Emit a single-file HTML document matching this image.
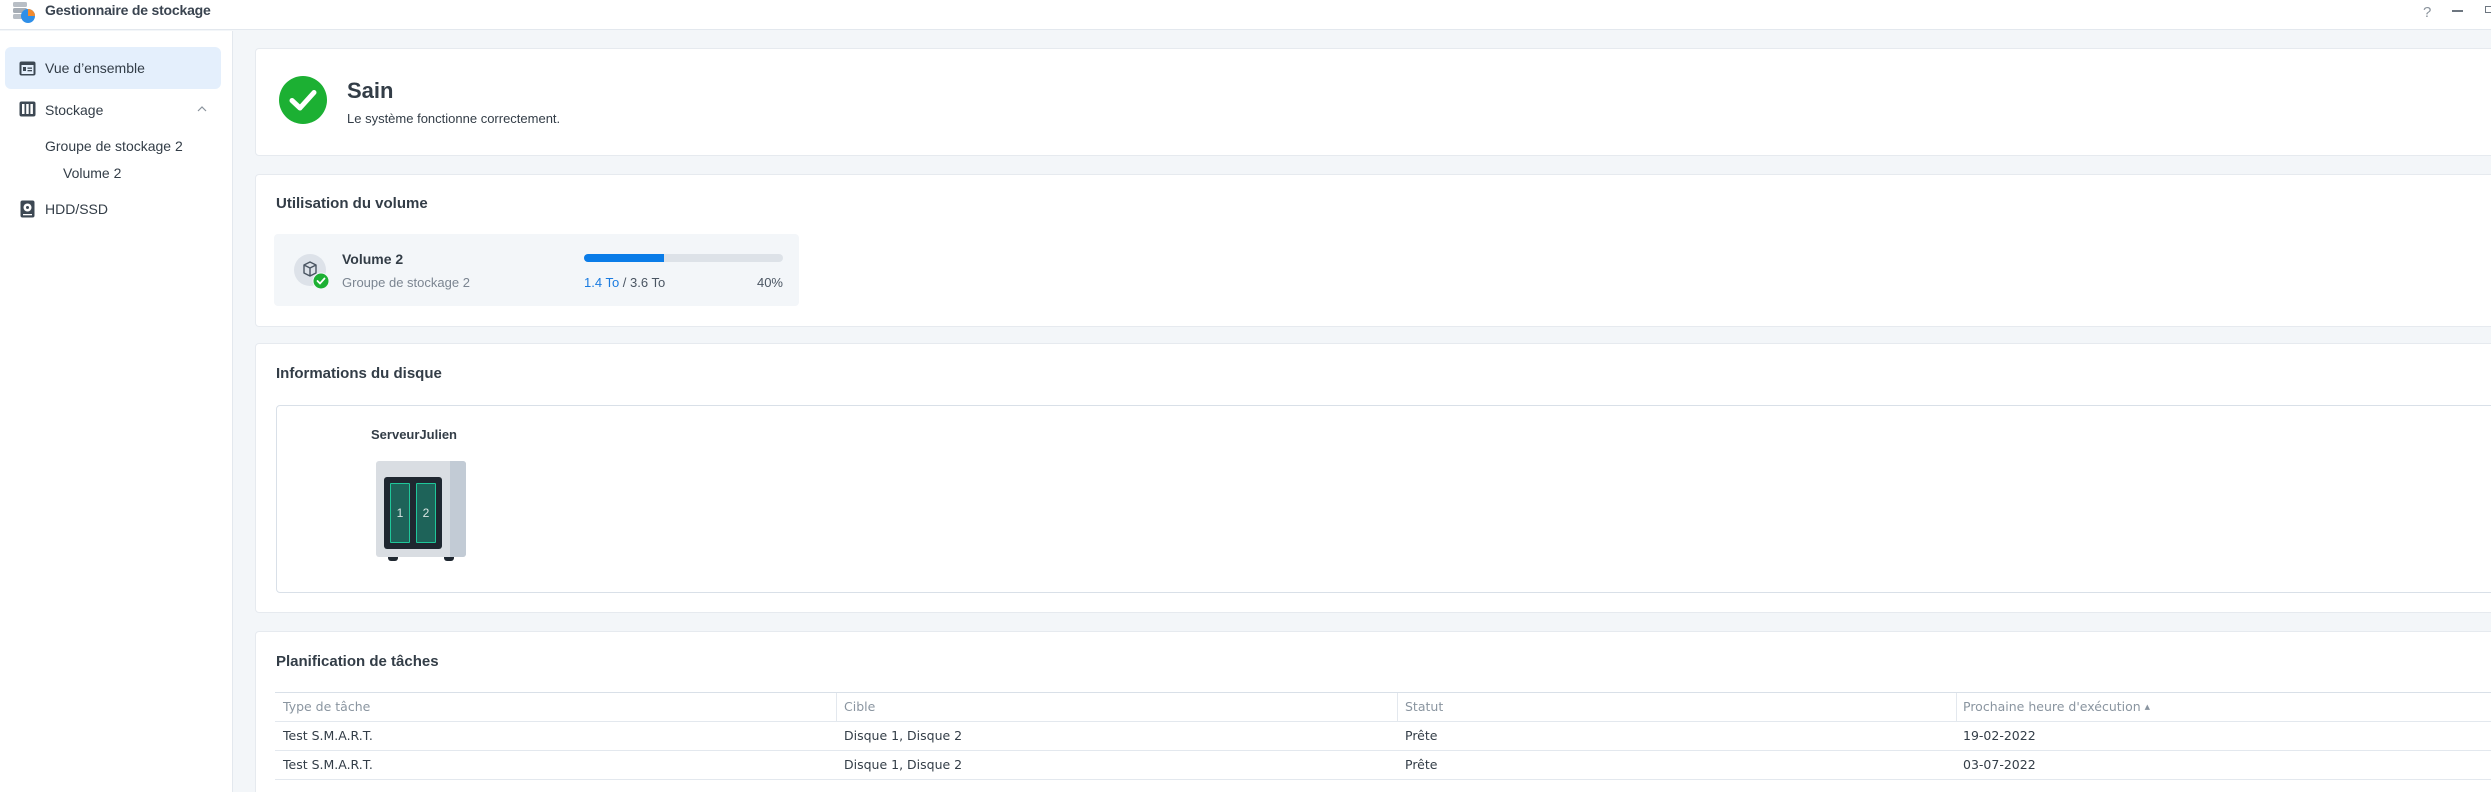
<!DOCTYPE html>
<html><head><meta charset="utf-8"><style>
*{margin:0;padding:0;box-sizing:border-box}
html{width:2491px;height:792px;overflow:hidden}
body{width:2491px;height:792px;overflow:hidden;background:#f3f6f9;font-family:"Liberation Sans",Arial,sans-serif;color:#333d47;position:relative}
.abs{position:absolute}
#top{left:0;top:0;width:2491px;height:30px;background:#fff;border-bottom:1px solid #e3e8ee}
#side{left:0;top:31px;width:233px;height:761px;background:#fff;border-right:1px solid #e3e8ee}
.card{background:#fff;border:1px solid #e6eaef;border-radius:4px;left:255px;width:2260px}
.t{white-space:nowrap}
.h{font-weight:bold;font-size:15px;color:#333d47}
.tbl{font-family:"DejaVu Sans",sans-serif;font-size:12.5px;color:#333d47}
</style></head><body>
<div id="top" class="abs">
  <svg class="abs" style="left:12px;top:1px" width="24" height="24" viewBox="0 0 24 24">
    <rect x="1" y="1" width="14" height="5" rx="1.5" fill="#b8bec5"/><rect x="1" y="7" width="14" height="5" rx="1.5" fill="#a6adb5"/><rect x="1" y="13" width="14" height="5" rx="1.5" fill="#b8bec5"/>
    <circle cx="16" cy="15" r="7" fill="#2f8fe8"/><path d="M16 15 L16 8 A7 7 0 0 1 23 15Z" fill="#f28b30"/>
  </svg>
  <div class="abs t" style="left:45px;top:2px;font-size:14px;font-weight:bold;color:#3a4450;letter-spacing:-0.2px">Gestionnaire de stockage</div>
  <div class="abs t" style="left:2423px;top:4px;font-size:15px;color:#8a939c">?</div>
  <div class="abs" style="left:2452px;top:10px;width:11px;height:1.5px;background:#6d7680"></div>
  <div class="abs" style="left:2485px;top:6px;width:8px;height:7px;border:1.5px solid #6d7680"></div>
</div>
<div id="side" class="abs">
  <div class="abs" style="left:5px;top:16px;width:216px;height:42px;background:#e4effc;border-radius:6px"></div>
  <svg class="abs" style="left:19px;top:30px" width="17" height="15" viewBox="0 0 17 15"><rect x="0.5" y="0.5" width="16" height="14" rx="2" fill="#3d4853"/><rect x="2.5" y="4" width="12" height="9" fill="#e4effc"/><rect x="4" y="6" width="3" height="4" fill="#3d4853"/><rect x="8.5" y="6.5" width="4.5" height="1.3" fill="#3d4853"/><rect x="8.5" y="9" width="4.5" height="1.3" fill="#3d4853"/></svg>
  <div class="abs t" style="left:45px;top:29px;font-size:14px;color:#333d47">Vue d’ensemble</div>
  <svg class="abs" style="left:19px;top:70px" width="17" height="16" viewBox="0 0 17 16"><rect x="0.5" y="0.5" width="16" height="15" rx="2" fill="#3d4853"/><rect x="3" y="3" width="2.5" height="10" fill="#fff"/><rect x="7.2" y="3" width="2.5" height="10" fill="#fff"/><rect x="11.4" y="3" width="2.5" height="10" fill="#fff"/></svg>
  <div class="abs t" style="left:45px;top:71px;font-size:14px">Stockage</div>
  <svg class="abs" style="left:197px;top:75px" width="10" height="6" viewBox="0 0 10 6"><path d="M1 5 L5 1 L9 5" fill="none" stroke="#8a939c" stroke-width="1.2"/></svg>
  <div class="abs t" style="left:45px;top:107px;font-size:14px">Groupe de stockage 2</div>
  <div class="abs t" style="left:63px;top:134px;font-size:14px">Volume 2</div>
  <svg class="abs" style="left:20px;top:169px" width="15" height="18" viewBox="0 0 15 18"><rect x="0.5" y="0.5" width="14" height="17" rx="2" fill="#3d4853"/><circle cx="7.5" cy="7.5" r="4" fill="#fff"/><circle cx="7.5" cy="7.5" r="1.5" fill="#3d4853"/><rect x="3" y="14" width="9" height="1.3" fill="#fff"/></svg>
  <div class="abs t" style="left:45px;top:170px;font-size:14px">HDD/SSD</div>
</div>

<div class="abs card" style="top:48px;height:108px"></div>
<svg class="abs" style="left:279px;top:76px" width="48" height="48" viewBox="0 0 48 48"><circle cx="24" cy="24" r="24" fill="#1cb033"/><path d="M13 24.5 L21 32 L35 16.5" fill="none" stroke="#fff" stroke-width="5" stroke-linecap="round" stroke-linejoin="round"/></svg>
<div class="abs t" style="left:347px;top:78px;font-size:22px;font-weight:bold;color:#333d47">Sain</div>
<div class="abs t" style="left:347px;top:111px;font-size:13px;color:#333d47">Le système fonctionne correctement.</div>

<div class="abs card" style="top:174px;height:153px"></div>
<div class="abs t h" style="left:276px;top:195px">Utilisation du volume</div>
<div class="abs" style="left:274px;top:234px;width:525px;height:72px;background:#f3f6f9;border-radius:4px"></div>
<svg class="abs" style="left:294px;top:254px" width="40" height="36" viewBox="0 0 40 36"><circle cx="16" cy="16" r="16" fill="#dde2e9"/><path d="M10 11 L16 8 L22 11 L22 19 L16 22 L10 19Z M10 11 L16 14 L22 11 M16 14 L16 22" fill="none" stroke="#4a5562" stroke-width="1.4" stroke-linejoin="round"/><circle cx="27" cy="27" r="8" fill="#1cb033" stroke="#f3f6f9" stroke-width="1"/><path d="M23.5 27 L26 29.5 L30.5 24.5" fill="none" stroke="#fff" stroke-width="1.8" stroke-linecap="round"/></svg>
<div class="abs t" style="left:342px;top:251px;font-size:14px;font-weight:bold">Volume 2</div>
<div class="abs t" style="left:342px;top:275px;font-size:13px;color:#7b8591">Groupe de stockage 2</div>
<div class="abs" style="left:584px;top:254px;width:199px;height:8px;background:#dde2e8;border-radius:4px"></div>
<div class="abs" style="left:584px;top:254px;width:80px;height:8px;background:#0a7ce8;border-radius:4px 0 0 4px"></div>
<div class="abs t" style="left:584px;top:275px;font-size:13px;color:#4a5562"><span style="color:#1a7be0">1.4 To</span> / 3.6 To</div>
<div class="abs t" style="left:743px;top:275px;width:40px;text-align:right;font-size:13px;color:#4a5562">40%</div>

<div class="abs card" style="top:343px;height:270px"></div>
<div class="abs t h" style="left:276px;top:365px">Informations du disque</div>
<div class="abs" style="left:276px;top:405px;width:2240px;height:188px;border:1px solid #d9e0e8;border-radius:4px;background:#fff"></div>
<div class="abs t" style="left:371px;top:427px;font-size:13px;font-weight:bold;color:#333d47">ServeurJulien</div>
<div class="abs" style="left:376px;top:461px;width:90px;height:96px;background:#d9dde2;border-radius:3px"></div>
<div class="abs" style="left:450px;top:461px;width:16px;height:96px;background:#c2cbd5;border-radius:0 3px 3px 0"></div>
<div class="abs" style="left:384px;top:477px;width:58px;height:72px;background:#1f2730;border-radius:3px"></div>
<div class="abs" style="left:390px;top:483px;width:20px;height:60px;background:#1e6359;border:1px solid #1fc79a;border-radius:1px;color:#dbe6e4;font-size:12px;text-align:center;line-height:58px">1</div>
<div class="abs" style="left:416px;top:483px;width:20px;height:60px;background:#1e6359;border:1px solid #1fc79a;border-radius:1px;color:#dbe6e4;font-size:12px;text-align:center;line-height:58px">2</div>
<div class="abs" style="left:388px;top:557px;width:10px;height:4px;background:#1f2730;border-radius:0 0 3px 3px"></div>
<div class="abs" style="left:444px;top:557px;width:10px;height:4px;background:#1f2730;border-radius:0 0 3px 3px"></div>

<div class="abs card" style="top:631px;height:161px;border-bottom:none;border-radius:4px 4px 0 0"></div>
<div class="abs t h" style="left:276px;top:653px">Planification de tâches</div>
<div class="abs" style="left:275px;top:692px;width:2240px;height:1px;background:#d9e0e8"></div>
<div class="abs" style="left:275px;top:721px;width:2240px;height:1px;background:#e3e8ee"></div>
<div class="abs" style="left:275px;top:750px;width:2240px;height:1px;background:#e3e8ee"></div>
<div class="abs" style="left:275px;top:779px;width:2240px;height:1px;background:#e3e8ee"></div>
<div class="abs" style="left:836px;top:693px;width:1px;height:28px;background:#e3e8ee"></div>
<div class="abs" style="left:1397px;top:693px;width:1px;height:28px;background:#e3e8ee"></div>
<div class="abs" style="left:1956px;top:693px;width:1px;height:28px;background:#e3e8ee"></div>
<div class="tbl">
<div class="abs t" style="left:283px;top:699px;color:#8a95a0">Type de tâche</div>
<div class="abs t" style="left:844px;top:699px;color:#8a95a0">Cible</div>
<div class="abs t" style="left:1405px;top:699px;color:#8a95a0">Statut</div>
<div class="abs t" style="left:1963px;top:699px;color:#8a95a0">Prochaine heure d'exécution <span style="font-size:7px;vertical-align:2px">▲</span></div>
<div class="abs t" style="left:283px;top:728px">Test S.M.A.R.T.</div>
<div class="abs t" style="left:844px;top:728px">Disque 1, Disque 2</div>
<div class="abs t" style="left:1405px;top:728px">Prête</div>
<div class="abs t" style="left:1963px;top:728px">19-02-2022</div>
<div class="abs t" style="left:283px;top:757px">Test S.M.A.R.T.</div>
<div class="abs t" style="left:844px;top:757px">Disque 1, Disque 2</div>
<div class="abs t" style="left:1405px;top:757px">Prête</div>
<div class="abs t" style="left:1963px;top:757px">03-07-2022</div>
</div>
</body></html>
